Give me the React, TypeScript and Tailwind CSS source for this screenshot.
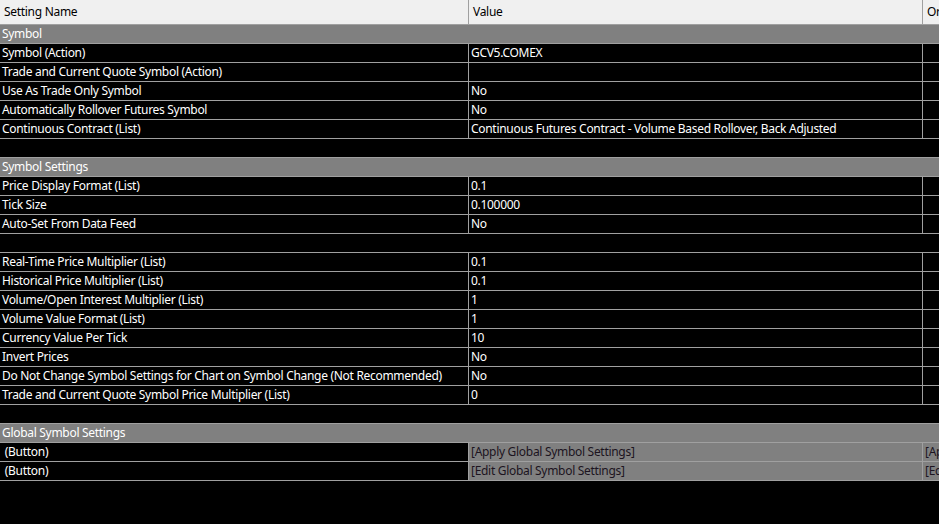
import React from "react";

type Row =
  | { kind: "group"; label: string }
  | { kind: "blank" }
  | { kind: "item"; name: string; value: string }
  | { kind: "button"; name: string; value: string; extra: string };

const rows: Row[] = [
  { kind: "group", label: "Symbol" },
  { kind: "item", name: "Symbol (Action)", value: "GCV5.COMEX" },
  { kind: "item", name: "Trade and Current Quote Symbol (Action)", value: "" },
  { kind: "item", name: "Use As Trade Only Symbol", value: "No" },
  { kind: "item", name: "Automatically Rollover Futures Symbol", value: "No" },
  {
    kind: "item",
    name: "Continuous Contract (List)",
    value: "Continuous Futures Contract - Volume Based Rollover, Back Adjusted",
  },
  { kind: "blank" },
  { kind: "group", label: "Symbol Settings" },
  { kind: "item", name: "Price Display Format (List)", value: "0.1" },
  { kind: "item", name: "Tick Size", value: "0.100000" },
  { kind: "item", name: "Auto-Set From Data Feed", value: "No" },
  { kind: "blank" },
  { kind: "item", name: "Real-Time Price Multiplier (List)", value: "0.1" },
  { kind: "item", name: "Historical Price Multiplier (List)", value: "0.1" },
  { kind: "item", name: "Volume/Open Interest Multiplier (List)", value: "1" },
  { kind: "item", name: "Volume Value Format (List)", value: "1" },
  { kind: "item", name: "Currency Value Per Tick", value: "10" },
  { kind: "item", name: "Invert Prices", value: "No" },
  {
    kind: "item",
    name: "Do Not Change Symbol Settings for Chart on Symbol Change (Not Recommended)",
    value: "No",
  },
  { kind: "item", name: "Trade and Current Quote Symbol Price Multiplier (List)", value: "0" },
  { kind: "blank" },
  { kind: "group", label: "Global Symbol Settings" },
  {
    kind: "button",
    name: " (Button)",
    value: "[Apply Global Symbol Settings]",
    extra: "[Apply Global Symbol Settings]",
  },
  {
    kind: "button",
    name: " (Button)",
    value: "[Edit Global Symbol Settings]",
    extra: "[Edit Global Symbol Settings]",
  },
];

const cell = "h-[18px] leading-[18px] whitespace-pre overflow-hidden";

function GridRow({ row }: { row: Row }) {
  if (row.kind === "group") {
    return (
      <div className="h-[19px] border-b border-[#a0a0a0] bg-[#808080]">
        <div className={`${cell} pl-[2px] text-white`}>{row.label}</div>
      </div>
    );
  }
  if (row.kind === "blank") {
    return <div className="h-[19px] border-b border-[#a0a0a0]" />;
  }
  if (row.kind === "button") {
    return (
      <div className="flex h-[19px] border-b border-[#a0a0a0]">
        <div className={`${cell} w-[469px] shrink-0 border-r border-[#a0a0a0] pl-[2px] text-white`}>
          {row.name}
        </div>
        <div className={`${cell} w-[454px] shrink-0 border-r border-[#a0a0a0] bg-[#808080] pl-[2px] text-[#1c1420]`}>
          {row.value}
        </div>
        <div className={`${cell} flex-1 bg-[#808080] pl-[2px] text-[#1c1420]`}>{row.extra}</div>
      </div>
    );
  }
  return (
    <div className="flex h-[19px] border-b border-[#a0a0a0]">
      <div className={`${cell} w-[469px] shrink-0 border-r border-[#a0a0a0] pl-[2px] text-white`}>
        {row.name}
      </div>
      <div className={`${cell} w-[454px] shrink-0 border-r border-[#a0a0a0] pl-[2px] text-white`}>
        {row.value}
      </div>
      <div className={`${cell} flex-1`} />
    </div>
  );
}

export default function App() {
  return (
    <div
      className="h-[524px] w-[939px] overflow-hidden bg-black text-[12px] tracking-[-0.3px]"
      style={{ fontFamily: '"Segoe UI", "Noto Sans", sans-serif' }}
    >
      {/* column headers */}
      <div className="flex h-[25px] border-b border-[#a0a0a0] bg-[#f0f0f0] text-black">
        <div className="w-[469px] shrink-0 border-r border-[#a0a0a0] pl-[4px] leading-[24px]">
          Setting Name
        </div>
        <div className="w-[454px] shrink-0 border-r border-[#a0a0a0] pl-[4px] leading-[24px]">
          Value
        </div>
        <div className="flex-1 overflow-hidden whitespace-nowrap pl-[4px] leading-[24px]">Order</div>
      </div>

      {rows.map((row, i) => (
        <GridRow key={i} row={row} />
      ))}
    </div>
  );
}
